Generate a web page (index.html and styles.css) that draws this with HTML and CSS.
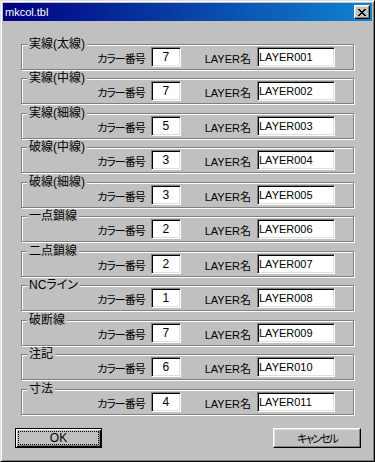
FILE: index.html
```html
<!DOCTYPE html>
<html>

<head>
    <title>mkcol.tbl</title>
    <meta charset="utf-8">
    <link rel="stylesheet" href="styles.css">
</head>

<body>

    <div class="window">
        <div class="titlebar">
            <span class="title">mkcol.tbl</span>
            <span class="close">
                <svg width="8" height="7" viewBox="0 0 8 7" shape-rendering="crispEdges">
                    <path d="M0 0h2v1h1v1h2v-1h1v-1h2v1h-1v1h-1v1h-1v1h1v1h1v1h1v1h-2v-1h-1v-1h-2v1h-1v1h-2v-1h1v-1h1v-1h1v-1h-1v-1h-1v-1h-1z" fill="#000"/>
                </svg>
            </span>
        </div>

        <div class="groups">
            <!-- one group per line type -->
            <div class="group">
                <span class="caption">実線(太線)</span>
                <span class="label">カラー番号</span>
                <input class="field num" type="text" value="7">
                <span class="label layer">LAYER名</span>
                <input class="field name" type="text" value="LAYER001">
            </div>
            <div class="group">
                <span class="caption">実線(中線)</span>
                <span class="label">カラー番号</span>
                <input class="field num" type="text" value="7">
                <span class="label layer">LAYER名</span>
                <input class="field name" type="text" value="LAYER002">
            </div>
            <div class="group">
                <span class="caption">実線(細線)</span>
                <span class="label">カラー番号</span>
                <input class="field num" type="text" value="5">
                <span class="label layer">LAYER名</span>
                <input class="field name" type="text" value="LAYER003">
            </div>
            <div class="group">
                <span class="caption">破線(中線)</span>
                <span class="label">カラー番号</span>
                <input class="field num" type="text" value="3">
                <span class="label layer">LAYER名</span>
                <input class="field name" type="text" value="LAYER004">
            </div>
            <div class="group">
                <span class="caption">破線(細線)</span>
                <span class="label">カラー番号</span>
                <input class="field num" type="text" value="3">
                <span class="label layer">LAYER名</span>
                <input class="field name" type="text" value="LAYER005">
            </div>
            <div class="group">
                <span class="caption">一点鎖線</span>
                <span class="label">カラー番号</span>
                <input class="field num" type="text" value="2">
                <span class="label layer">LAYER名</span>
                <input class="field name" type="text" value="LAYER006">
            </div>
            <div class="group">
                <span class="caption">二点鎖線</span>
                <span class="label">カラー番号</span>
                <input class="field num" type="text" value="2">
                <span class="label layer">LAYER名</span>
                <input class="field name" type="text" value="LAYER007">
            </div>
            <div class="group">
                <span class="caption">NCライン</span>
                <span class="label">カラー番号</span>
                <input class="field num" type="text" value="1">
                <span class="label layer">LAYER名</span>
                <input class="field name" type="text" value="LAYER008">
            </div>
            <div class="group">
                <span class="caption">破断線</span>
                <span class="label">カラー番号</span>
                <input class="field num" type="text" value="7">
                <span class="label layer">LAYER名</span>
                <input class="field name" type="text" value="LAYER009">
            </div>
            <div class="group">
                <span class="caption">注記</span>
                <span class="label">カラー番号</span>
                <input class="field num" type="text" value="6">
                <span class="label layer">LAYER名</span>
                <input class="field name" type="text" value="LAYER010">
            </div>
            <div class="group">
                <span class="caption">寸法</span>
                <span class="label">カラー番号</span>
                <input class="field num" type="text" value="4">
                <span class="label layer">LAYER名</span>
                <input class="field name" type="text" value="LAYER011">
            </div>
        </div>

        <div class="buttons">
            <button class="btn default"><span class="focus">OK</span></button>
            <button class="btn cancel">キャンセル</button>
        </div>
    </div>

</body>

</html>
```

FILE: styles.css
```css
body {
    margin: 0;
    background: #c0c0c0;
    font-family: "Liberation Sans", "Noto Sans CJK JP", sans-serif;
    font-size: 12px;
    color: #000;
}

.window {
    width: 375px;
    height: 462px;
    box-sizing: border-box;
    background: #c0c0c0;
    border: 1px solid;
    border-color: #dfdfdf #000 #000 #dfdfdf;
    box-shadow: inset 1px 1px #fff, inset -1px -1px #808080;
    padding: 2px;
}

.titlebar {
    height: 18px;
    background: linear-gradient(to right, #000080, #1084d0);
    display: flex;
    align-items: center;
    justify-content: space-between;
    padding: 0 2px;
    color: #fff;
}

.title {
    font-size: 11px;
}

.close {
    width: 16px;
    height: 14px;
    box-sizing: border-box;
    background: #c0c0c0;
    border: 1px solid;
    border-color: #fff #000 #000 #fff;
    box-shadow: inset -1px -1px #808080, inset 1px 1px #dfdfdf;
    display: flex;
    align-items: center;
    justify-content: center;
}

.groups {
    padding: 0 18px;
}

.group {
    position: relative;
    height: 26px;
    box-sizing: border-box;
    margin-top: 8.5px;
    border: 1px solid #808080;
    box-shadow: inset 1px 1px #fff, 1px 1px #fff;
    display: flex;
    align-items: center;
    justify-content: flex-end;
    padding-right: 18px;
}

.group:first-child {
    margin-top: 22.5px;
}

.caption {
    position: absolute;
    left: 5px;
    top: -8px;
    padding: 0 2px;
    background: #c0c0c0;
    line-height: 14px;
    font-feature-settings: "palt";
}

.label {
    margin-right: 6px;
    padding-top: 2px;
    font-size: 11px;
    letter-spacing: -1px;
    font-feature-settings: "palt";
}

.label.layer {
    margin-left: 24px;
    letter-spacing: 0;
}

.field {
    height: 20px;
    box-sizing: border-box;
    margin: 0;
    padding: 0 1px;
    border: 1px solid;
    border-color: #808080 #fff #fff #808080;
    box-shadow: inset 1px 1px #000, inset -1px -1px #dfdfdf;
    background: #fff;
    font-family: inherit;
    font-size: 11px;
    color: #000;
    outline: none;
}

.field.num {
    width: 30px;
    text-align: center;
    font-size: 12px;
}

.field.name {
    width: 78px;
}

.buttons {
    display: flex;
    justify-content: space-between;
    padding: 13.5px 11px 0 12px;
}

.btn {
    height: 20px;
    box-sizing: border-box;
    margin: 0;
    padding: 0;
    background: #c0c0c0;
    border: 1px solid;
    border-color: #fff #000 #000 #fff;
    box-shadow: inset -1px -1px #808080, inset 1px 1px #dfdfdf;
    font-family: inherit;
    font-size: 12px;
    color: #000;
}

.btn.default {
    width: 87px;
    padding: 2px;
    border: 1px solid #000;
    box-shadow: inset 1px 1px #fff, inset -1px -1px #000, inset -2px -2px #808080;
}

.btn.cancel {
    width: 88px;
    font-size: 11px;
    letter-spacing: -2px;
    font-feature-settings: "palt";
}

.focus {
    display: flex;
    align-items: center;
    justify-content: center;
    height: 100%;
    box-sizing: border-box;
    border: 1px dotted #000;
}
```
